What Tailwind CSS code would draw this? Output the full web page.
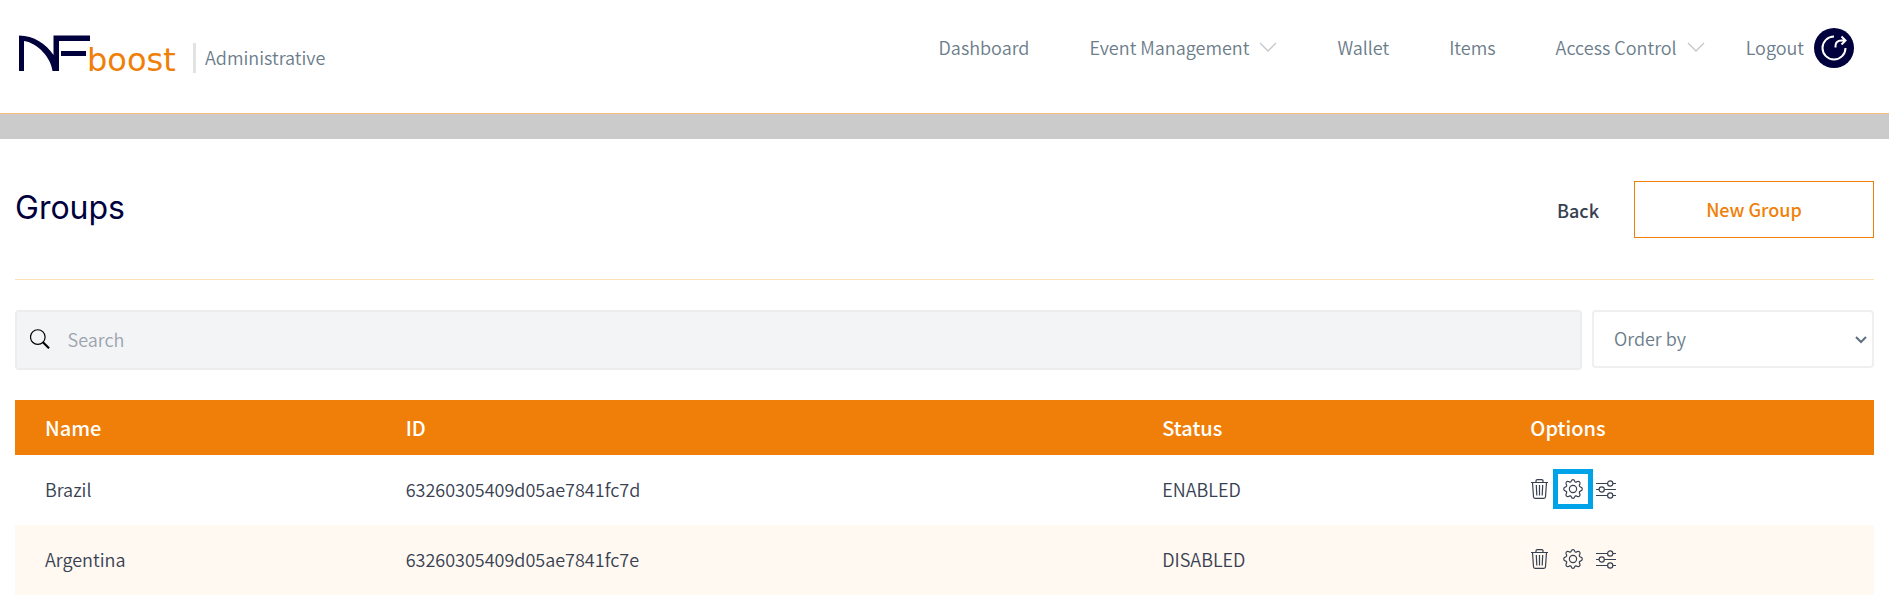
<!DOCTYPE html>
<html lang="en">
<head>
<meta charset="utf-8">
<meta name="viewport" content="width=device-width, initial-scale=1">
<title>Groups</title>
<script src="https://cdn.jsdelivr.net/npm/@tailwindcss/browser@4"></script>
</head>
<body class="bg-white font-['Noto_Sans_CJK_SC','Noto_Sans',sans-serif] text-lg font-[350] text-[#374151]">
<svg class="hidden" aria-hidden="true">
  <symbol id="chevron" viewBox="0 0 18 10"><path d="M1 1l8 8 8-8" fill="none" stroke="currentColor" stroke-width="1.3"/></symbol>
  <symbol id="trash" viewBox="0 0 20 20"><g fill="none" stroke="currentColor" stroke-width="1.2"><path d="M1 3.500h17M6 3.500V2q0-1.300 1.300-1.300h4.400Q13 .7 13 2v1.500M2.500 3.500l1 14.300q.1 1.500 1.500 1.500h9q1.400 0 1.500-1.500l1-14.300M6.300 6l.5 10.500M9.500 6v10.500M12.700 6l-.5 10.500"/></g></symbol>
  <symbol id="gear" viewBox="0 0 20 20"><g fill="none" stroke="currentColor" stroke-width="1.2" stroke-linejoin="round"><circle cx="10" cy="10" r="3.600"/><path d="M8.300 2.200Q8.700.7 10 .7t1.700 1.500q.4 1.100 1.500.9l1.300-.6q1.200-.4 2 .4t.4 2l-.6 1.300q-.2 1.300 1 1.700 2 .5 2 2.100t-2 2.100q-1.200.4-1 1.700l.6 1.300q.4 1.200-.4 2t-2 .4l-1.300-.6q-1.200-.2-1.500.9-.4 1.500-1.700 1.500t-1.700-1.500q-.4-1.100-1.500-.9l-1.300.6q-1.200.4-2-.4t-.4-2l.6-1.300q.2-1.300-1-1.700Q.7 11.600.7 10t2-2.100q1.200-.4 1-1.700l-.6-1.300q-.4-1.200.4-2t2-.4l1.300.6q1.200.2 1.500-.9z"/></g></symbol>
  <symbol id="sliders" viewBox="0 0 20 20"><g fill="none" stroke="currentColor" stroke-width="1.2"><path d="M0 4.500h11.500M17 4.500h3M0 10.500h3M8.500 10.500H20M0 16.500h11.500M17 16.500h3"/><circle cx="14.200" cy="4.500" r="2.600"/><circle cx="5.700" cy="10.500" r="2.600"/><circle cx="14.200" cy="16.500" r="2.600"/></g></symbol>
</svg>

<header class="flex h-[114px] items-start justify-between border-b border-[#f9bd7c] pr-[35px] pl-[18px] text-[#6b7c8a]">
  <div class="flex items-start pt-[34px]">
    <a href="#" aria-label="NFboost" class="block">
      <svg width="166" height="48" viewBox="0 0 166 48">
        <g fill="#00003c">
          <path d="M1 1.500C16 1.500 28 10 35.500 21V1.500H72v5.500H41V37h-6.500C33 24 20 9 6 7V37H1z"/>
          <path d="M43 17h25v5H43z"/>
        </g>
        <text x="69" y="37" font-family="DejaVu Sans" font-size="32" font-weight="400" fill="#f07f09">boost</text>
      </svg>
    </a>
    <div class="mt-[9px] ml-[9px] flex h-[30px] items-center border-l-3 border-[#e3e3e3] pb-0.5 pl-[9px]">Administrative</div>
  </div>
  <nav class="mt-7 flex h-10 items-center gap-15">
    <a href="#" class="pb-0.5">Dashboard</a>
    <a href="#" class="flex items-center gap-[10px] pb-0.5">Event Management<svg class="h-[10px] w-[18px] text-[#c4c8cc]"><use href="#chevron"/></svg></a>
    <a href="#" class="pb-0.5">Wallet</a>
    <a href="#" class="pb-0.5">Items</a>
    <div class="flex items-center gap-[41px]">
      <a href="#" class="flex items-center gap-[10px] pb-0.5">Access Control<svg class="h-[10px] w-[18px] text-[#c4c8cc]"><use href="#chevron"/></svg></a>
      <a href="#" class="flex items-center gap-[10px]"><span class="pb-0.5">Logout</span>
        <svg width="40" height="40" viewBox="0 0 40 40"><circle cx="20" cy="20" r="20" fill="#00003c"/><g fill="none" stroke="#fff" stroke-width="2"><path d="M20 8.500a11.500 11.500 0 1 0 11.500 11.500"/><path d="M21.500 19.500v-1.500q0-5.500 6-5.500h3.500M27.500 8.500l4 4-4 4"/></g></svg>
      </a>
    </div>
  </nav>
</header>
<div class="h-[25px] bg-[#cbcbcb]"></div>

<main class="px-[15px]">
  <div class="flex items-center justify-between border-b border-[#fde0b8] pt-[42px] pb-[41px]">
    <h1 class="pb-1 font-[Inter,sans-serif] text-[32px] leading-10 font-normal text-[#00003c]">Groups</h1>
    <div class="flex items-center gap-[35px] font-medium">
      <a href="#">Back</a>
      <button type="button" class="h-[57px] w-60 border border-[#f07f09] pb-0.5 text-[#f07f09]">New Group</button>
    </div>
  </div>

  <form class="mt-[30px] flex items-start gap-[10px] text-[#6b7c8a]">
    <label class="flex h-[60px] flex-1 items-center gap-[18px] rounded-sm border-2 border-[#ebedef] bg-[#f3f4f6] pb-0.5 pl-[13px]">
      <svg width="20" height="20" viewBox="0 0 20 20" fill="none" stroke="#000"><circle cx="8" cy="8" r="7.500" stroke-width="1.2"/><path d="M13 13l6.500 6.500" stroke-width="2.200"/></svg>
      <input type="search" aria-label="Search" placeholder="Search" class="w-full bg-transparent outline-none placeholder:text-[#9ca3af]">
    </label>
    <div class="relative w-[282px]">
      <select aria-label="Order by" class="h-[58px] w-full appearance-none rounded-sm border-2 border-[#eeeff0] bg-white pb-0.5 pl-5"><option>Order by</option></select>
      <svg class="pointer-events-none absolute top-[26px] right-[7px] h-2 w-3" viewBox="0 0 12 8" fill="none" stroke="#5f7080" stroke-width="2"><path d="M1 1l5 5 5-5"/></svg>
    </div>
  </form>

  <table class="mt-[30px] w-full table-fixed text-left">
    <thead class="bg-[#f07f09] text-xl text-white">
      <tr class="h-[55px]">
        <th class="w-[19.4%] px-[30px] font-medium">Name</th>
        <th class="w-[40.7%] px-[30px] font-medium">ID</th>
        <th class="w-[19.8%] px-[30px] font-medium">Status</th>
        <th class="px-[30px] font-medium">Options</th>
      </tr>
    </thead>
    <tbody>
      <tr class="h-[70px]">
        <td class="px-[30px] pb-0.5">Brazil</td>
        <td class="px-[30px] pb-0.5">63260305409d05ae7841fc7d</td>
        <td class="px-[30px] pb-0.5">ENABLED</td>
        <td class="px-[30px] pb-0.5">
          <div class="flex items-center gap-[13px]">
            <button type="button" aria-label="Delete"><svg class="size-5"><use href="#trash"/></svg></button>
            <button type="button" aria-label="Settings" class="relative"><svg class="size-5"><use href="#gear"/></svg><span class="absolute -inset-[10px] border-5 border-[#00a2e8]"></span></button>
            <button type="button" aria-label="Permissions"><svg class="size-5"><use href="#sliders"/></svg></button>
          </div>
        </td>
      </tr>
      <tr class="h-[70px] bg-[#fff9f2]">
        <td class="px-[30px] pb-0.5">Argentina</td>
        <td class="px-[30px] pb-0.5">63260305409d05ae7841fc7e</td>
        <td class="px-[30px] pb-0.5">DISABLED</td>
        <td class="px-[30px] pb-0.5">
          <div class="flex items-center gap-[13px]">
            <button type="button" aria-label="Delete"><svg class="size-5"><use href="#trash"/></svg></button>
            <button type="button" aria-label="Settings"><svg class="size-5"><use href="#gear"/></svg></button>
            <button type="button" aria-label="Permissions"><svg class="size-5"><use href="#sliders"/></svg></button>
          </div>
        </td>
      </tr>
    </tbody>
  </table>
</main>
</body>
</html>
